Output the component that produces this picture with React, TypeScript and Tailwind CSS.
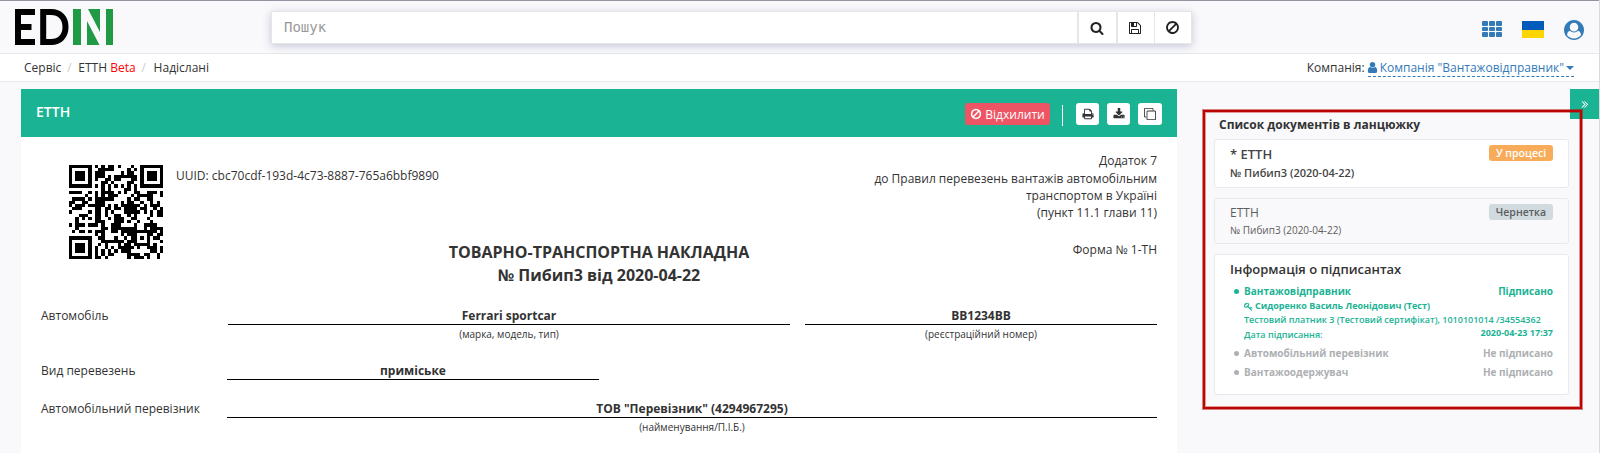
import React from "react";

type Glyph = { d: string; className?: string };

function Icon({ d, className }: Glyph) {
  return (
    <svg viewBox="0 0 1792 1792" className={className} fill="currentColor" aria-hidden="true">
      <path d={d} />
    </svg>
  );
}

const SEARCH =
  "M1216 832q0-185-131.5-316.5t-316.5-131.5-316.5 131.5-131.5 316.5 131.5 316.5 316.5 131.5 316.5-131.5 131.5-316.5zm512 832q0 52-38 90t-90 38q-54 0-90-38l-343-342q-179 124-399 124-143 0-273.5-55.5t-225-150-150-225-55.5-273.5 55.5-273.5 150-225 225-150 273.5-55.5 273.5 55.5 225 150 150 225 55.5 273.5q0 220-124 399l343 343q37 37 37 90z";
const SAVE =
  "M512 1536h768v-384h-768v384zm896 0h128v-896q0-14-10-38.5t-20-34.5l-281-281q-10-10-34-20t-39-10v416q0 40-28 68t-68 28h-576q-40 0-68-28t-28-68v-416h-128v1280h128v-416q0-40 28-68t68-28h832q40 0 68 28t28 68v416zm-384-928v-320q0-13-9.5-22.5t-22.5-9.5h-192q-13 0-22.5 9.5t-9.5 22.5v320q0 13 9.5 22.5t22.5 9.5h192q13 0 22.5-9.5t9.5-22.5zm640 32v928q0 40-28 68t-68 28h-1344q-40 0-68-28t-28-68v-1344q0-40 28-68t68-28h928q40 0 88 20t76 48l280 280q28 28 48 76t20 88z";
const BAN =
  "M1440 893q0-161-87-295l-754 753q137 89 297 89 111 0 211.5-43.5t173.5-116.5 116-174.5 43-212.5zm-999 299l755-754q-135-91-300-91-148 0-273 73t-198 199-73 274q0 162 89 299zm1223-299q0 157-61 300t-163.5 246-245 164-298.5 61-298.5-61-245-164-163.5-246-61-300 61-299.5 163.5-245.5 245-164 298.5-61 298.5 61 245 164 163.5 245.5 61 299.5z";
const PRINT =
  "M448 1536h896v-256h-896v256zm0-640h896v-384h-160q-40 0-68-28t-28-68v-160h-640v640zm1152 64q0-26-19-45t-45-19-45 19-19 45 19 45 45 19 45-19 19-45zm128 0v416q0 13-9.5 22.5t-22.5 9.5h-224v160q0 40-28 68t-68 28h-960q-40 0-68-28t-28-68v-160h-224q-13 0-22.5-9.5t-9.5-22.5v-416q0-79 56.5-135.5t135.5-56.5h64v-544q0-40 28-68t68-28h672q40 0 88 20t76 48l152 152q28 28 48 76t20 88v256h64q79 0 135.5 56.5t56.5 135.5z";
const DOWNLOAD =
  "M1344 1344q0-26-19-45t-45-19-45 19-19 45 19 45 45 19 45-19 19-45zm256 0q0-26-19-45t-45-19-45 19-19 45 19 45 45 19 45-19 19-45zm128-224v320q0 40-28 68t-68 28h-1472q-40 0-68-28t-28-68v-320q0-40 28-68t68-28h465l135 136q58 56 136 56t136-56l136-136h464q40 0 68 28t28 68zm-325-569q17 41-14 70l-448 448q-18 19-45 19t-45-19l-448-448q-31-29-14-70 17-39 59-39h256v-448q0-26 19-45t45-19h256q26 0 45 19t19 45v448h256q42 0 59 39z";
const CLONE =
  "M1664 1632v-1088q0-13-9.500-22.500t-22.500-9.500h-1088q-13 0-22.500 9.500t-9.500 22.500v1088q0 13 9.500 22.500t22.500 9.500h1088q13 0 22.500-9.500t9.500-22.500zm128-1088v1088q0 66-47 113t-113 47h-1088q-66 0-113-47t-47-113v-1088q0-66 47-113t113-47h1088q66 0 113 47t47 113zm-384-384v160h-128v-160q0-13-9.500-22.500t-22.500-9.500h-1088q-13 0-22.500 9.500t-9.500 22.500v1088q0 13 9.500 22.500t22.500 9.500h160v128h-160q-66 0-113-47t-47-113v-1088q0-66 47-113t113-47h1088q66 0 113 47t47 113z";
const ANGLES =
  "M979 960q0 13-10 23l-466 466q-10 10-23 10t-23-10l-50-50q-10-10-10-23t10-23l393-393-393-393q-10-10-10-23t10-23l50-50q10-10 23-10t23 10l466 466q10 10 10 23zm384 0q0 13-10 23l-466 466q-10 10-23 10t-23-10l-50-50q-10-10-10-23t10-23l393-393-393-393q-10-10-10-23t10-23l50-50q10-10 23-10t23 10l466 466q10 10 10 23z";
const USER =
  "M1536 1399q0 109-62.5 187t-150.5 78h-854q-88 0-150.5-78t-62.5-187q0-85 8.5-160.5t31.5-152 58.5-131 94-89 134.5-34.5q131 128 313 128t313-128q76 0 134.5 34.5t94 89 58.5 131 31.5 152 8.5 160.5zm-256-887q0 159-112.5 271.5t-271.5 112.5-271.5-112.5-112.5-271.5 112.5-271.5 271.5-112.5 271.5 112.5 112.5 271.5z";
const USER_CIRCLE =
  "M1523 1339q-22-155-87.5-257.5t-184.5-118.5q-67 74-159.5 115.5t-195.5 41.5-195.5-41.5-159.5-115.5q-119 16-184.5 118.5t-87.5 257.5q106 150 271 237.5t356 87.5 356-87.5 271-237.5zm-243-699q0-159-112.5-271.5t-271.5-112.5-271.5 112.5-112.5 271.5 112.5 271.5 271.5 112.5 271.5-112.5 112.5-271.5zm512 256q0 182-71 347.5t-190.5 286-285.5 191.5-349 71q-182 0-348-71t-286-191-191-286-71-348 71-348 191-286 286-191 348-71 348 71 286 191 191 286 71 348z";
const KEY =
  "M832 512q0-80-56-136t-136-56-136 56-56 136q0 42 19 83-41-19-83-19-80 0-136 56t-56 136 56 136 136 56 136-56 56-136q0-42-19-83 41 19 83 19 80 0 136-56t56-136zm851 704q0 17-49 66t-66 49q-9 0-28.5-16t-36.5-33-38.5-40-24.5-26l-96 96 220 220q28 28 28 68 0 42-39 81t-81 39q-40 0-68-28l-671-671q-176 131-365 131-163 0-265.5-102.5t-102.5-265.5q0-160 95-313t248-248 313-95q163 0 265.5 102.5t102.5 265.5q0 189-131 365l355 355 96-96q-3-3-26-24.5t-40-38.5-33-36.5-16-28.5q0-17 49-66t66-49q13 0 23 10 6 6 46 44.5t82 79.5 86.5 86 73 78 28.5 41z";

/* ---------- QR code, version 3 (29 x 29), byte mode, level L, mask 3 ---------- */

const SIZE = 29;
const DATA_WORDS = 55;
const ECC_WORDS = 15;
const MASK = 3;

function gfMul(x: number, y: number) {
  let z = 0;
  for (let i = 7; i >= 0; i--) {
    z = (z << 1) ^ ((z >>> 7) * 0x11d);
    z ^= ((y >>> i) & 1) * x;
  }
  return z;
}

function eccFor(data: number[], degree: number): number[] {
  const gen: number[] = Array(degree).fill(0);
  gen[degree - 1] = 1;
  let root = 1;
  for (let i = 0; i < degree; i++) {
    for (let j = 0; j < degree; j++) {
      gen[j] = gfMul(gen[j], root);
      if (j + 1 < degree) gen[j] ^= gen[j + 1];
    }
    root = gfMul(root, 2);
  }
  const rem: number[] = Array(degree).fill(0);
  for (const b of data) {
    const f = b ^ (rem.shift() as number);
    rem.push(0);
    gen.forEach((c, i) => (rem[i] ^= gfMul(c, f)));
  }
  return rem;
}

function codewords(text: string) {
  const bits: number[] = [];
  const put = (v: number, n: number) => {
    for (let i = n - 1; i >= 0; i--) bits.push((v >>> i) & 1);
  };
  put(4, 4);
  put(text.length, 8);
  for (const ch of text) put(ch.charCodeAt(0), 8);
  put(0, 4);
  for (let p = 0xec; bits.length < DATA_WORDS * 8; p ^= 0xec ^ 0x11) put(p, 8);
  const out: number[] = [];
  for (let i = 0; i < bits.length; i += 8) out.push(parseInt(bits.slice(i, i + 8).join(""), 2));
  return out.concat(eccFor(out, ECC_WORDS));
}

function buildMatrix(text: string) {
  const m: boolean[][] = Array.from({ length: SIZE }, () => Array(SIZE).fill(false));
  const fixed: boolean[][] = Array.from({ length: SIZE }, () => Array(SIZE).fill(false));
  const set = (x: number, y: number, v: boolean) => {
    if (x < 0 || y < 0 || x >= SIZE || y >= SIZE) return;
    m[y][x] = v;
    fixed[y][x] = true;
  };
  for (let i = 0; i < SIZE; i++) {
    set(6, i, i % 2 === 0);
    set(i, 6, i % 2 === 0);
  }
  for (const [cx, cy] of [[3, 3], [SIZE - 4, 3], [3, SIZE - 4]]) {
    for (let dy = -4; dy <= 4; dy++)
      for (let dx = -4; dx <= 4; dx++) {
        const d = Math.max(Math.abs(dx), Math.abs(dy));
        set(cx + dx, cy + dy, d !== 2 && d !== 4);
      }
  }
  for (let dy = -2; dy <= 2; dy++)
    for (let dx = -2; dx <= 2; dx++) set(22 + dx, 22 + dy, Math.max(Math.abs(dx), Math.abs(dy)) !== 1);

  const info = (1 << 3) | MASK;
  let rem = info;
  for (let i = 0; i < 10; i++) rem = (rem << 1) ^ ((rem >>> 9) * 0x537);
  const fmt = ((info << 10) | rem) ^ 0x5412;
  const bit = (i: number) => ((fmt >>> i) & 1) === 1;
  for (let i = 0; i <= 5; i++) set(8, i, bit(i));
  set(8, 7, bit(6));
  set(8, 8, bit(7));
  set(7, 8, bit(8));
  for (let i = 9; i < 15; i++) set(14 - i, 8, bit(i));
  for (let i = 0; i < 8; i++) set(SIZE - 1 - i, 8, bit(i));
  for (let i = 8; i < 15; i++) set(8, SIZE - 15 + i, bit(i));
  set(8, SIZE - 8, true);

  const data = codewords(text);
  let k = 0;
  for (let right = SIZE - 1; right >= 1; right -= 2) {
    if (right === 6) right = 5;
    for (let v = 0; v < SIZE; v++)
      for (let j = 0; j < 2; j++) {
        const x = right - j;
        const y = ((right + 1) & 2) === 0 ? SIZE - 1 - v : v;
        if (fixed[y][x]) continue;
        if (k < data.length * 8) m[y][x] = ((data[k >>> 3] >>> (7 - (k & 7))) & 1) === 1;
        k++;
        if ((x + y) % 3 === 0) m[y][x] = !m[y][x];
      }
  }
  return m;
}

function QrCode({ text, className }: { text: string; className?: string }) {
  const m = buildMatrix(text);
  let d = "";
  m.forEach((row, y) => row.forEach((on, x) => on && (d += `M${x} ${y}h1v1h-1z`)));
  return (
    <svg viewBox="0 0 29 29" className={className} shapeRendering="crispEdges">
      <path d={d} fill="#000" />
    </svg>
  );
}

/* ---------- Page ---------- */

const UUID = "cbc70cdf-193d-4c73-8887-765a6bbf9890";

function Logo() {
  return (
    <svg viewBox="0 0 98 36" className="h-9 w-[98px]">
      <path d="M20 3H3v30h17M3 18h13.500" fill="none" stroke="#000" strokeWidth="6" />
      <path d="M28.200 3v30H36c9 0 14.500-6 14.500-15S45 3 36 3z" fill="none" stroke="#000" strokeWidth="6" />
      <path d="M58 0h8v36h-8zM91 0h7v36h-7zM72 12l12.500 24H72zM73 0h12v23z" fill="#219a46" />
    </svg>
  );
}

function SearchBar() {
  const cell = "flex items-center justify-center border-l border-[#e5e6e7] pr-[2px] text-[#222]";
  return (
    <div className="flex h-[33px] w-[921px] border border-[#e5e6e7] bg-white shadow-[0_2px_8px_rgba(60,70,120,0.28)]">
      <div className="flex flex-1 items-center pl-3 font-['DejaVu_Sans_Mono',monospace] text-[14px] text-[#999]">
        Пошук
      </div>
      <div className={`${cell} w-[39px] border-l-2`}>
        <Icon d={SEARCH} className="h-[14px] w-[14px]" />
      </div>
      <div className={`${cell} w-[38px] border-l-2`}>
        <Icon d={SAVE} className="h-[14px] w-[14px]" />
      </div>
      <div className={`${cell} w-[37px]`}>
        <Icon d={BAN} className="h-[15px] w-[15px]" />
      </div>
    </div>
  );
}

function Header() {
  return (
    <header className="flex h-[54px] items-start border-t border-b border-t-[#98929f] border-b-[#e7eaec]">
      <div className="w-[271px] pt-2 pl-[15px]">
        <Logo />
      </div>
      <div className="pt-[10px]">
        <SearchBar />
      </div>
      <div className="ml-auto flex pt-[18px] pr-[15px] text-[#337ab7]">
        <div className="mt-[2px] mr-5 grid h-4 w-5 grid-cols-3 grid-rows-3 gap-x-px gap-y-[1px]">
          {Array.from({ length: 9 }, (_, i) => (
            <span key={i} className="rounded-[1px] bg-[#337ab7]" />
          ))}
        </div>
        <div className="mt-[2px] mr-5 flex h-[17px] w-[22px] flex-col">
          <span className="flex-1 bg-[#005bbb]" />
          <span className="flex-1 bg-[#ffd500]" />
        </div>
        <Icon d={USER_CIRCLE} className="mt-px h-5 w-5" />
      </div>
    </header>
  );
}

function Breadcrumbs() {
  return (
    <nav className="flex h-7 items-start justify-between border-b border-[#e7eaec] bg-white pt-1 pr-[25px] pl-6 text-[12px] leading-[20px] text-[#333]">
      <div className="flex">
        <span>Сервіс</span>
        <span className="w-[17px] pl-[6px] text-[#ccc]">/</span>
        <span>
          ЕТТН <span className="text-[#f00]">Beta</span>
        </span>
        <span className="w-[18px] pl-[6px] text-[#ccc]">/</span>
        <span>Надіслані</span>
      </div>
      <div className="flex">
        <span className="mr-[3px]">Компанія:</span>
        <span className="flex h-[19px] items-start border-b border-dashed border-[#337ab7] text-[#337ab7]">
          <Icon d={USER} className="mt-[3px] mr-px -ml-[2px] h-[13px] w-[13px]" />
          Компанія "Вантажовідправник"
          <svg viewBox="0 0 8 4" className="mt-2 ml-[2px] h-1 w-2" fill="currentColor">
            <path d="M0 0h8L4 4z" />
          </svg>
        </span>
      </div>
    </nav>
  );
}

function TitleBar() {
  const btn = "flex h-[22px] items-center justify-center rounded-[3px] bg-white text-[#333]";
  return (
    <div className="flex h-12 bg-[#1ab394] pr-[15px] pl-[15px]">
      <h1 className="pt-[13px] text-[14px] leading-5 font-semibold text-white">ЕТТН</h1>
      <div className="ml-auto flex pt-[14px]">
        <div className="flex h-[22px] w-[85px] items-center justify-center gap-[3px] rounded-[3px] bg-[#ed5565] text-[12px] leading-[18px] text-white">
          <Icon d={BAN} className="h-3 w-3" />
          <span className="pt-[2px]">Відхилити</span>
        </div>
        <div className="mt-[2px] ml-3 h-[21px] w-px bg-white" />
        <div className={`${btn} ml-[13px] w-[23px]`}>
          <Icon d={PRINT} className="h-3 w-3" />
        </div>
        <div className={`${btn} ml-2 w-[23px]`}>
          <Icon d={DOWNLOAD} className="h-3 w-3" />
        </div>
        <div className={`${btn} ml-2 w-6`}>
          <Icon d={CLONE} className="h-3 w-3" />
        </div>
      </div>
    </div>
  );
}

function Field({ value, hint, className }: { value: string; hint?: string; className?: string }) {
  return (
    <div className={`text-center ${className ?? ""}`}>
      <div className="h-[19px] border-b border-black text-[12px] leading-[20px] font-bold">{value}</div>
      {hint && <div className="text-[10px] leading-[18px]">{hint}</div>}
    </div>
  );
}

function Document() {
  return (
    <article className="h-[316px] bg-white px-5 text-[12px] text-[#333]">
      <div className="flex h-[169px]">
        <div className="w-[322px] pt-7 pl-7">
          <div className="flex">
            <QrCode text={UUID} className="h-[94px] w-[94px] shrink-0" />
            <div className="ml-[13px] pt-[2px] leading-[18px] whitespace-nowrap">UUID: {UUID}</div>
          </div>
        </div>
        <h2 className="flex-1 pt-[104px] text-center text-[16px] leading-[23px] font-bold whitespace-nowrap">
          ТОВАРНО-ТРАНСПОРТНА НАКЛАДНА
          <br />№ Пибип3 від 2020-04-22
        </h2>
        <div className="w-[322px] pt-[15px] text-right leading-[17px]">
          <p className="mb-px">Додаток 7</p>
          до Правил перевезень вантажів автомобільним
          <br />
          транспортом в Україні
          <br />
          (пункт 11.1 глави 11)
          <p className="mt-[20px]">Форма № 1-ТН</p>
        </div>
      </div>
      <div className="flex h-[55px]">
        <div className="w-[187px] leading-[20px]">Автомобіль</div>
        <Field value="Ferrari sportcar" hint="(марка, модель, тип)" className="w-[562px]" />
        <Field value="BB1234BB" hint="(реєстраційний номер)" className="ml-[15px] w-[352px]" />
      </div>
      <div className="flex h-[38px]">
        <div className="w-[186px] leading-[20px]">Вид перевезень</div>
        <Field value="приміське" className="w-[372px]" />
      </div>
      <div className="flex">
        <div className="w-[186px] leading-[20px]">Автомобільний перевізник</div>
        <Field value='ТОВ "Перевізник" (4294967295)' hint="(найменування/П.І.Б.)" className="flex-1" />
      </div>
    </article>
  );
}

function Sidebar() {
  const card = "rounded-[3px] border border-[#e7eaec] px-[15px]";
  return (
    <aside className="w-[355px] pt-[27px] text-[#333]">
      <h3 className="pl-[5px] text-[12px] leading-[18px] font-bold">Список документів в ланцюжку</h3>
      <div className={`${card} mt-[5px] flex h-[49px] justify-between bg-white`}>
        <div className="pt-[5px] font-semibold text-[#444]">
          <div className="text-[13px] leading-[19px]">* ЕТТН</div>
          <div className="text-[11px] leading-[17px]">№ Пибип3 (2020-04-22)</div>
        </div>
        <span className="mt-[5px] h-4 w-16 rounded-[3px] bg-[#f8ac59] text-center text-[10.5px] leading-4 font-semibold text-white">
          У процесі
        </span>
      </div>
      <div className={`${card} mt-[10px] flex h-[46px] justify-between text-[#5e5e5e]`}>
        <div className="pt-[5px]">
          <div className="text-[12px] leading-[18px]">ЕТТН</div>
          <div className="text-[10px] leading-4">№ Пибип3 (2020-04-22)</div>
        </div>
        <span className="mt-[5px] h-4 w-16 rounded-[3px] bg-[#d1dade] text-center text-[10.5px] leading-4 font-semibold">
          Чернетка
        </span>
      </div>
      <div className={`${card} mt-[10px] h-[141px] bg-white pt-1 font-bold`}>
        <h4 className="text-[13px] leading-5 font-semibold">Інформація о підписантах</h4>
        <div className="mt-1 flex items-center text-[10px] leading-[16px] text-[#1ab394]">
          <span className="mr-[5px] ml-1 h-[5px] w-[5px] rounded-full bg-[#1ab394]" />
          Вантажовідправник
          <span className="ml-auto">Підписано</span>
        </div>
        <div className="pl-[14px] text-[9px] leading-[14px] text-[#1ab394]">
          <div className="flex items-center">
            <Icon d={KEY} className="mr-[2px] h-[9px] w-[9px]" />
            Сидоренко Василь Леонідович (Тест)
          </div>
          <div className="font-semibold">Тестовий платник 3 (Тестовий сертифікат), 1010101014 /34554362</div>
          <div className="flex h-[15px] justify-between">
            <span className="pt-px font-semibold">Дата підписання:</span>
            <span className="-mt-px">2020-04-23 17:37</span>
          </div>
        </div>
        {["Автомобільний перевізник", "Вантажоодержувач"].map((name) => (
          <div key={name} className="mt-[3px] flex items-center text-[10px] leading-4 text-[#adb0b3]">
            <span className="mr-[5px] ml-1 h-[5px] w-[5px] rounded-full bg-[#adb0b3]" />
            {name}
            <span className="ml-auto">Не підписано</span>
          </div>
        ))}
      </div>
    </aside>
  );
}

export default function App() {
  return (
    <div className="relative h-[453px] w-[1600px] overflow-hidden border-r border-[#d9dadd] bg-[#f9f9fb] font-['Open_Sans','Noto_Sans',sans-serif]">
      <Header />
      <Breadcrumbs />
      <div className="flex items-start pt-[7px] pl-[21px]">
        <main className="w-[1156px]">
          <TitleBar />
          <Document />
        </main>
        <div className="ml-[37px]">
          <Sidebar />
        </div>
        <button className="ml-px flex h-[30px] w-[29px] items-center justify-center bg-[#1ab394] text-white">
          <Icon d={ANGLES} className="ml-px h-3 w-3" />
        </button>
      </div>
      <div className="absolute top-[110px] left-[1203px] h-[299px] w-[379px] border-2 border-[#b90504] shadow-[0_0_0_1px_rgba(185,5,4,0.5),inset_0_0_0_1px_rgba(185,5,4,0.4)]" />
    </div>
  );
}
